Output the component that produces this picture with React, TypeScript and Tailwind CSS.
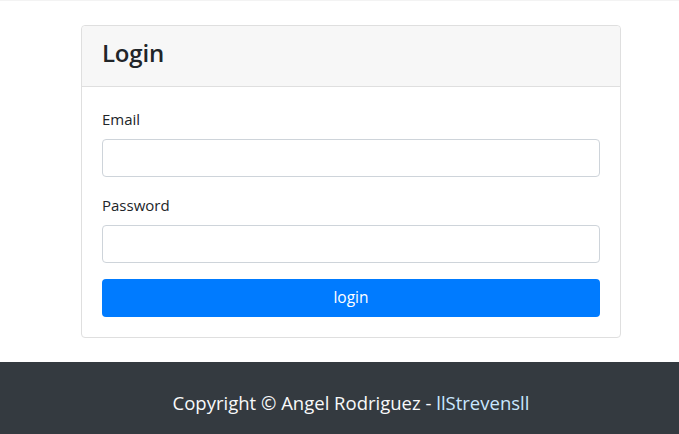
import React from "react";

export default function App() {
  return (
    <div className="min-h-[434px] bg-white flex flex-col text-[#212529]">
      <div className="h-px bg-[#f3f3f3]" />
      <main className="flex-1 flex justify-center pl-[23px] pt-[24px] pb-[24px] font-['Open_Sans',sans-serif]">
        <div className="w-[540px] border border-[#dfdfdf] rounded-[4px] bg-white">
          <div className="h-[61px] bg-[#f7f7f7] border-b border-[#dfdfdf] rounded-t-[4px] px-[20px] pt-[15px]">
            <h3 className="text-[24px] font-semibold leading-none tracking-[-0.2px]">Login</h3>
          </div>
          <form className="p-[20px] flex flex-col" onSubmit={(e) => e.preventDefault()}>
            <label className="text-[15px] leading-[24px] mb-[8px]">Email</label>
            <input
              type="email"
              className="h-[38px] border border-[#ced4da] rounded-[4px] px-3 outline-none"
            />
            <label className="text-[15px] leading-[24px] mb-[8px] mt-[16px]">Password</label>
            <input
              type="password"
              className="h-[38px] border border-[#ced4da] rounded-[4px] px-3 outline-none"
            />
            <button
              type="submit"
              className="mt-[16px] h-[38px] rounded-[4px] bg-[#007bff] text-white text-[15.5px] leading-none"
            >
              login
            </button>
          </form>
        </div>
      </main>
      <footer className="h-[72px] bg-[#343a40] flex items-start justify-center pl-[23px] pt-[32px] font-['Open_Sans',sans-serif]">
        <p className="text-[18.5px] text-[#f8f9fa] leading-none">
          Copyright © Angel Rodriguez - <span className="text-[#c9e7ff]">llStrevensll</span>
        </p>
      </footer>
    </div>
  );
}
